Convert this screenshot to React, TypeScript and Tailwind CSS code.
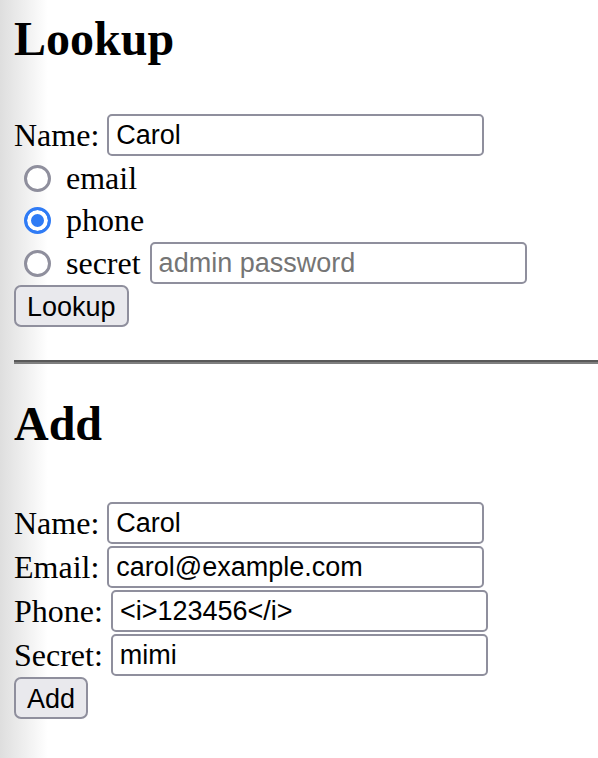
import React from 'react';

const serif = "font-['Liberation_Serif','Times_New_Roman',serif]";
const sans = "font-['Liberation_Sans',Arial,sans-serif]";

const inputCls = `h-[42px] border-2 border-[#8f8f9d] rounded-[5px] px-[7px] text-[27px] text-black bg-white outline-none placeholder:text-[#757575] ${sans}`;

const buttonCls = `h-[42px] px-[11px] border-2 border-[#8f8f9d] rounded-[7px] bg-[#e9e9ed] text-[27px] text-black ${sans}`;

const radioCls =
  'appearance-none shrink-0 w-[27px] h-[27px] ml-[10px] mr-[6px] rounded-full border-[3px] border-[#8f8f9d] bg-white checked:border-[#2f7bf5] checked:bg-[#2f7bf5] checked:shadow-[inset_0_0_0_4px_#fff]';

interface FieldProps {
  label: string;
  value?: string;
  width: string;
}

const Field: React.FC<FieldProps> = ({ label, value, width }) => (
  <div className="flex items-center gap-[8px] h-[44px]">
    <span>{label}</span>
    <input className={`${inputCls} ${width}`} defaultValue={value} />
  </div>
);

export default function App() {
  return (
    <div className={`min-h-[758px] w-[598px] overflow-hidden pl-[14px] bg-[linear-gradient(to_right,#dedede,#ffffff_48px)] text-[32px] text-black ${serif}`}>
      <h1 className="mt-[15px] h-[48px] leading-[48px] text-[48px] font-bold">Lookup</h1>

      <form className="mt-[50px] flex flex-col items-start" onSubmit={(e) => e.preventDefault()}>
        <Field label="Name:" value="Carol" width="w-[377px]" />
        <label className="flex items-center h-[42px]">
          <input type="radio" name="by" className={radioCls} />
          <span className="ml-[9px]">email</span>
        </label>
        <label className="flex items-center h-[42px]">
          <input type="radio" name="by" className={radioCls} defaultChecked />
          <span className="ml-[9px]">phone</span>
        </label>
        <div className="flex items-center h-[44px]">
          <input type="radio" name="by" className={radioCls} />
          <span className="ml-[9px]">secret</span>
          <input className={`${inputCls} w-[377px] ml-[9px]`} placeholder="admin password" />
        </div>
        <button type="submit" className={buttonCls}>Lookup</button>
      </form>

      <hr className="mt-[33px] h-0 border-t-2 border-b-2 border-t-[#595959] border-b-[#7f7f7f]" />

      <h1 className="mt-[36px] h-[48px] leading-[48px] text-[48px] font-bold">Add</h1>

      <form className="mt-[53px] flex flex-col items-start" onSubmit={(e) => e.preventDefault()}>
        <Field label="Name:" value="Carol" width="w-[377px]" />
        <Field label="Email:" value="carol@example.com" width="w-[377px]" />
        <Field label="Phone:" value="<i>123456</i>" width="w-[377px]" />
        <Field label="Secret:" value="mimi" width="w-[377px]" />
        <button type="submit" className={buttonCls}>Add</button>
      </form>
    </div>
  );
}
